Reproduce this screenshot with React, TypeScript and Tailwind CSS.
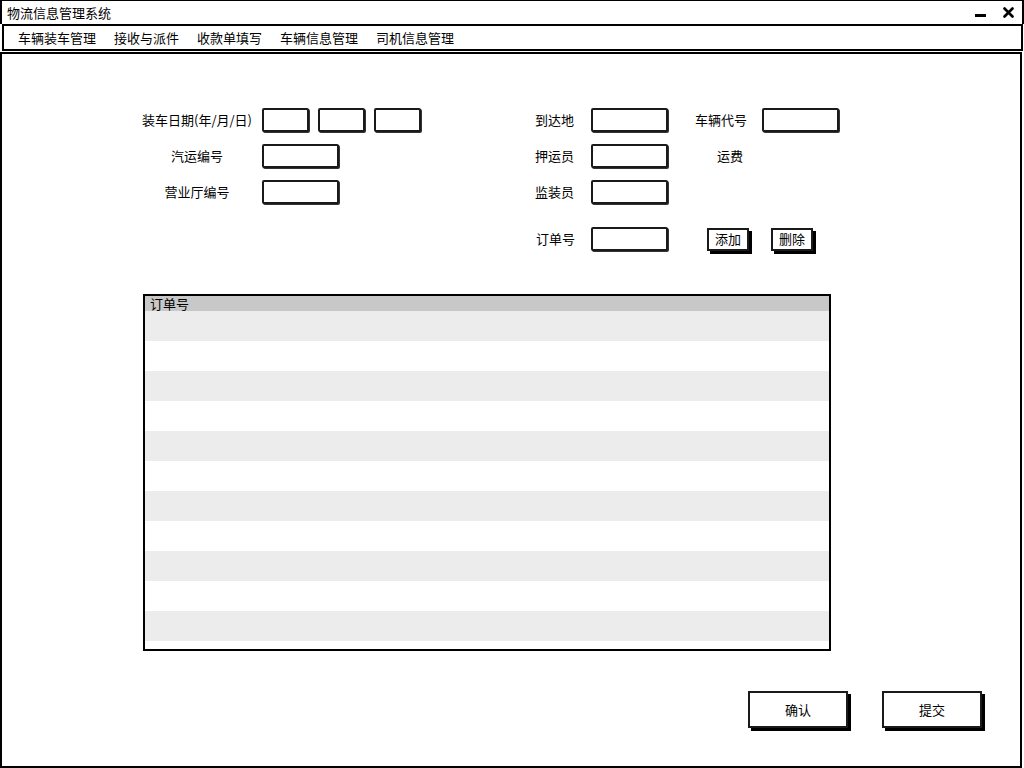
const menu = ["车辆装车管理", "接收与派件", "收款单填写", "车辆信息管理", "司机信息管理"];

function Field({ w = "w-[77px]" }: { w?: string }) {
  return <div className={`${w} h-[24px] border-2 border-[#1a1a1a] rounded-[2px] bg-white shadow-[1px_1px_0_#333]`} />;
}

function SmallButton({ label }: { label: string }) {
  return (
    <div className="h-[23px] px-[6px] flex items-center border-2 border-[#1a1a1a] bg-white shadow-[3px_3px_0_#000] text-[13px]">
      {label}
    </div>
  );
}

function BigButton({ label }: { label: string }) {
  return (
    <div className="w-[100px] h-[37px] flex items-center justify-center border-2 border-[#1a1a1a] bg-white shadow-[3px_3px_0_#000] text-[13px]">
      {label}
    </div>
  );
}

export default function App() {
  const rows = Array.from({ length: 11 });
  return (
    <div
      className="w-[1024px] h-[768px] bg-white flex flex-col text-black overflow-hidden"
      style={{ fontFamily: '"Noto Sans CJK SC", "Noto Sans", sans-serif' }}
    >
      {/* title bar */}
      <div className="h-[24px] border-t border-x-2 border-black flex items-center pl-[5px] pr-[8px] text-[13px] leading-none">
        <span>物流信息管理系统</span>
        <div className="ml-auto flex items-center gap-[17px]">
          <svg width="11" height="8" viewBox="0 0 11 8">
            <rect x="0" y="5" width="11" height="3" fill="#000" />
          </svg>
          <svg width="11" height="11" viewBox="0 0 11 11">
            <path d="M1.5 1.5 L9.5 9.5 M9.5 1.5 L1.5 9.5" stroke="#000" strokeWidth="2.6" strokeLinecap="round" />
          </svg>
        </div>
      </div>

      {/* menu bar */}
      <div className="h-[27px] mx-[2px] mr-[1px] border-2 border-black flex items-center pl-[14px] gap-[18px] text-[13px] leading-none">
        {menu.map((m) => (
          <span key={m}>{m}</span>
        ))}
      </div>

      {/* content */}
      <div className="flex-1 border-2 border-black mt-[1px] mr-[2px] flex flex-col">
        <div className="flex pt-[54px]">
          {/* left form */}
          <div className="ml-[138px] flex flex-col gap-[12px] text-[13px]">
            <div className="flex items-center">
              <span className="w-[122px] text-center pr-[8px]">装车日期(年/月/日)</span>
              <div className="flex gap-[9px]">
                <Field w="w-[47px]" />
                <Field w="w-[47px]" />
                <Field w="w-[47px]" />
              </div>
            </div>
            <div className="flex items-center">
              <span className="w-[122px] text-center pr-[8px]">汽运编号</span>
              <Field />
            </div>
            <div className="flex items-center">
              <span className="w-[122px] text-center pr-[8px]">营业厅编号</span>
              <Field />
            </div>
          </div>

          {/* right form */}
          <div className="ml-[114px] flex flex-col text-[13px]">
            <div className="flex items-center h-[24px]">
              <span className="w-[56px]">到达地</span>
              <Field />
              <span className="ml-[27px] w-[67px]">车辆代号</span>
              <Field />
            </div>
            <div className="flex items-center h-[24px] mt-[12px]">
              <span className="w-[56px]">押运员</span>
              <Field />
              <span className="ml-[49px]">运费</span>
            </div>
            <div className="flex items-center h-[24px] mt-[12px]">
              <span className="w-[56px]">监装员</span>
              <Field />
            </div>
            <div className="flex items-center h-[24px] mt-[23px]">
              <span className="w-[56px] pl-[1px]">订单号</span>
              <Field />
              <div className="ml-[39px] flex gap-[22px]">
                <SmallButton label="添加" />
                <SmallButton label="删除" />
              </div>
            </div>
          </div>
        </div>

        {/* table */}
        <div className="ml-[141px] mt-[43px] w-[688px] h-[357px] border-2 border-black bg-white flex flex-col">
          <div className="h-[15px] bg-[#c8c8c8] text-[13px] leading-[15px] pl-[5px]">订单号</div>
          {rows.map((_, i) => (
            <div key={i} className={`h-[30px] shrink-0 ${i % 2 === 0 ? "bg-[#ececec]" : "bg-white"}`} />
          ))}
        </div>

        {/* footer buttons */}
        <div className="flex justify-end gap-[34px] mt-[40px] mr-[38px]">
          <BigButton label="确认" />
          <BigButton label="提交" />
        </div>
      </div>
    </div>
  );
}
